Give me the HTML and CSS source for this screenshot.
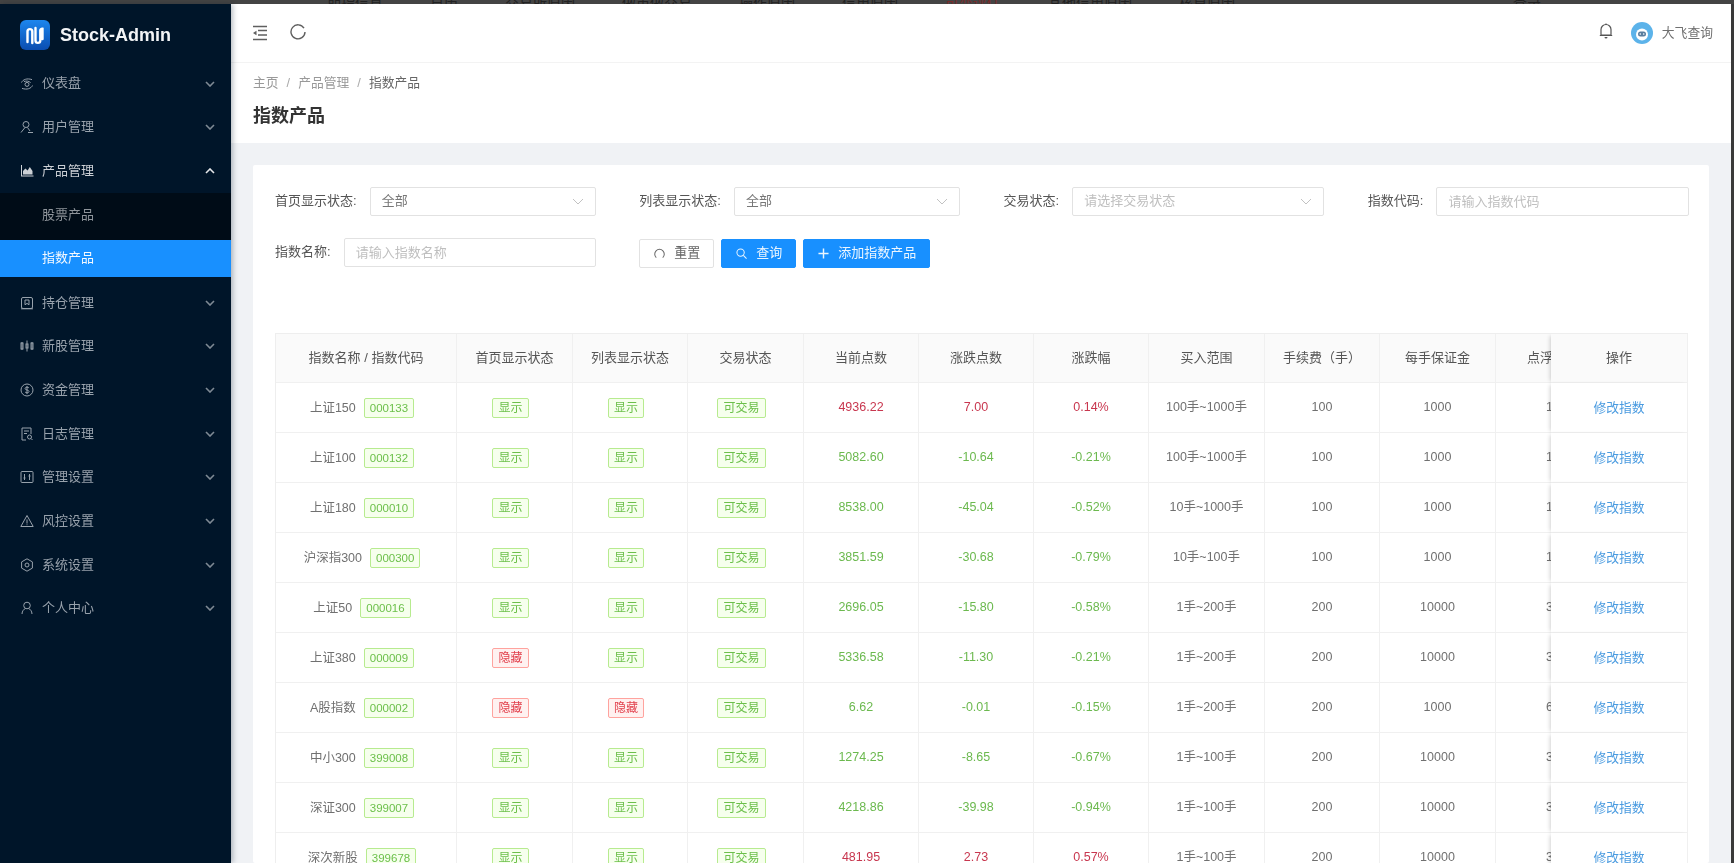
FILE: index.html
```html
<!DOCTYPE html>
<html lang="zh-CN">
<head>
<meta charset="utf-8">
<title>Stock-Admin 指数产品</title>
<link rel="stylesheet" href="styles.css">
</head>
<body>
<div class="app">
  <div class="strip">
    <span>期指信息</span><span>日历</span><span>交易所原因</span><span>做市做交易</span><span>操作原因</span><span>信用原因</span><span class="strip-red">可变评估</span><span>其他信用原因</span><span>核算原因</span><span class="strip-end">登录</span>
  </div>
  <div class="shell">
    <aside class="sidebar">
      <div class="brand">
        <svg class="logo" viewBox="0 0 30 30">
          <defs><linearGradient id="lg" x1="0" y1="0" x2="0" y2="1"><stop offset="0" stop-color="#1c86ee"/><stop offset="1" stop-color="#0a4db0"/></linearGradient></defs>
          <rect width="30" height="30" rx="6" fill="url(#lg)"/>
          <path d="M7.5 22V11.5a2.400 2.400 0 0 1 4.800 0V23M15.500 8v12.500a2.400 2.400 0 0 0 4.800 0V10.500a1.800 1.800 0 0 1 2.200-1.800V19" fill="none" stroke="#fff" stroke-width="2.400" stroke-linecap="round"/>
        </svg>
        <span class="brand-name">Stock-Admin</span>
      </div>
      <nav class="menu">
        <a class="item"><svg class="ic" viewBox="0 0 14 14"><circle cx="7" cy="7.400" r="2"/><path d="M1.500 5.500C3 2.400 7 1 12 2.600M12.500 8.500C11 11.600 7 13 2 11.400M4 4.600C6 3.700 9 4 10.600 5.600"/></svg><span class="label">仪表盘</span><svg class="chev" viewBox="0 0 10 6"><path d="M1 1l4 4 4-4"/></svg></a>
        <a class="item"><svg class="ic" viewBox="0 0 14 14"><circle cx="6" cy="4.500" r="3"/><path d="M1 12.500L5 7.500M7.500 7.500l2.500 3.500M8 12.500h5"/></svg><span class="label">用户管理</span><svg class="chev" viewBox="0 0 10 6"><path d="M1 1l4 4 4-4"/></svg></a>
        <a class="item item-open"><svg class="ic ic-fill" viewBox="0 0 14 14"><path d="M1 1v11.500h12.500v-1H2V1z"/><path d="M3 10.600V7l2.400-2.600 2.200 2L9.800 3l2.700 4v3.600z"/></svg><span class="label">产品管理</span><svg class="chev" viewBox="0 0 10 6"><path d="M1 5l4-4 4 4"/></svg></a>
        <div class="sub">
          <a class="sub-item">股票产品</a>
        </div>
        <a class="sub-item sub-active">指数产品</a>
        <a class="item"><svg class="ic" viewBox="0 0 14 14"><rect x="1.500" y="1.500" width="11" height="11" rx="1.500"/><path d="M1 12.800h12M5 4v4.800l2-1.400 2 1.400V4z"/></svg><span class="label">持仓管理</span><svg class="chev" viewBox="0 0 10 6"><path d="M1 1l4 4 4-4"/></svg></a>
        <a class="item"><svg class="ic" viewBox="0 0 14 14"><path d="M2 3v8M7 1.500v11M12 3v8"/><rect x="1" y="4" width="2" height="6"/><rect x="6" y="5" width="2" height="4"/><rect x="11" y="4" width="2" height="6"/></svg><span class="label">新股管理</span><svg class="chev" viewBox="0 0 10 6"><path d="M1 1l4 4 4-4"/></svg></a>
        <a class="item"><svg class="ic" viewBox="0 0 14 14"><circle cx="7" cy="7" r="6"/><path d="M9 5c-.500-1-3.800-1.400-3.900.500C5 7.500 9 6.500 9 8.500c0 1.800-3.500 1.500-4 .400M7 3v8"/></svg><span class="label">资金管理</span><svg class="chev" viewBox="0 0 10 6"><path d="M1 1l4 4 4-4"/></svg></a>
        <a class="item"><svg class="ic" viewBox="0 0 14 14"><path d="M6 13H2V1h9v6M4 4h5M4 6.500h3"/><circle cx="9.500" cy="10" r="2"/><path d="M11 11.500l1.500 1.500"/></svg><span class="label">日志管理</span><svg class="chev" viewBox="0 0 10 6"><path d="M1 1l4 4 4-4"/></svg></a>
        <a class="item"><svg class="ic" viewBox="0 0 14 14"><rect x="1" y="1.500" width="12" height="11" rx="1"/><path d="M4.500 4v6M9.500 4v6M3.500 8h2M8.500 6h2"/></svg><span class="label">管理设置</span><svg class="chev" viewBox="0 0 10 6"><path d="M1 1l4 4 4-4"/></svg></a>
        <a class="item"><svg class="ic" viewBox="0 0 14 14"><path d="M7 1.500L.800 12.500h12.400zM7 5.500v4M7 10.400v.800"/></svg><span class="label">风控设置</span><svg class="chev" viewBox="0 0 10 6"><path d="M1 1l4 4 4-4"/></svg></a>
        <a class="item"><svg class="ic" viewBox="0 0 14 14"><path d="M7 .800l5.400 3.100v6.200L7 13.200l-5.400-3.100V3.900z"/><circle cx="7" cy="7" r="2"/></svg><span class="label">系统设置</span><svg class="chev" viewBox="0 0 10 6"><path d="M1 1l4 4 4-4"/></svg></a>
        <a class="item"><svg class="ic" viewBox="0 0 14 14"><circle cx="7" cy="4.500" r="3.300"/><path d="M2 13c0-3 2-5 3.500-5.500M12 13c0-3-2-5-3.500-5.500"/></svg><span class="label">个人中心</span><svg class="chev" viewBox="0 0 10 6"><path d="M1 1l4 4 4-4"/></svg></a>
      </nav>
    </aside>
    <main class="main">
      <header class="topbar">
        <svg class="tool tool-menu" viewBox="0 0 16 16"><path d="M1 1.500h14M6 5.500h9M6 10h9M1 14.500h14"/><path class="solid" d="M1 8l3.500-2.300v4.600z"/></svg>
        <svg class="tool tool-refresh" viewBox="0 0 16 16"><path d="M14 4.200A7 7 0 1 0 15 8"/></svg>
        <div class="top-right">
          <svg class="bell" viewBox="0 0 14 16"><path d="M2 12V6.500a5 5 0 0 1 10 0V12zM.800 12.500h12.400"/><path class="solid" d="M5.500 14h3a1.500 1.500 0 0 1-3 0zM6 1.500a1 1 0 0 1 2 0z"/></svg>
          <svg class="avatar" viewBox="0 0 22 22"><circle cx="11" cy="11" r="11" fill="#5cb3ea"/><circle cx="11" cy="12.500" r="6" fill="#fff"/><rect x="7" y="9.500" width="8" height="5" rx="2.500" fill="#5a7d9e"/><circle cx="9.300" cy="12" r=".800" fill="#fff"/><circle cx="12.700" cy="12" r=".800" fill="#fff"/></svg>
          <span class="user">大飞查询</span>
        </div>
      </header>
      <section class="page-head">
        <div class="crumbs"><span>主页</span><i>/</i><span>产品管理</span><i>/</i><span class="crumb-now">指数产品</span></div>
        <h1 class="title">指数产品</h1>
      </section>
      <section class="content">
        <div class="card">
          <form class="filters">
            <div class="field"><label>首页显示状态:</label><div class="select"><span>全部</span><svg class="caret" viewBox="0 0 12 7"><path d="M1 1l5 5 5-5"/></svg></div></div>
            <div class="field"><label>列表显示状态:</label><div class="select"><span>全部</span><svg class="caret" viewBox="0 0 12 7"><path d="M1 1l5 5 5-5"/></svg></div></div>
            <div class="field"><label>交易状态:</label><div class="select select-empty"><span>请选择交易状态</span><svg class="caret" viewBox="0 0 12 7"><path d="M1 1l5 5 5-5"/></svg></div></div>
            <div class="field"><label>指数代码:</label><input class="input" placeholder="请输入指数代码"></div>
            <div class="field"><label>指数名称:</label><input class="input" placeholder="请输入指数名称"></div>
            <div class="actions">
              <button type="button" class="btn"><svg class="btn-ic" viewBox="0 0 12 12"><path d="M2.500 10.500A5.200 5.200 0 1 1 9.500 10.500"/></svg>重置</button>
              <button type="button" class="btn btn-primary"><svg class="btn-ic" viewBox="0 0 12 12"><circle cx="5" cy="5" r="4"/><path d="M8 8l3.500 3.500"/></svg>查询</button>
              <button type="button" class="btn btn-primary"><svg class="btn-ic btn-plus" viewBox="0 0 12 12"><path d="M6 .500v11M.500 6h11"/></svg>添加指数产品</button>
            </div>
          </form>
          <div class="table-wrap">
            <table class="table">
              <colgroup><col class="c-name"><col class="c-w"><col class="c-n"><col class="c-w"><col class="c-n"><col class="c-n"><col class="c-n"><col class="c-w"><col class="c-n"><col class="c-w"><col class="c-n"><col class="c-op"></colgroup>
              <thead><tr><th>指数名称 / 指数代码</th><th>首页显示状态</th><th>列表显示状态</th><th>交易状态</th><th>当前点数</th><th>涨跌点数</th><th>涨跌幅</th><th>买入范围</th><th>手续费（手）</th><th>每手保证金</th><th>点浮比例</th><th class="op">操作</th></tr></thead>
              <tbody>
                <tr><td>上证150<b class="tag tag-code">000133</b></td><td><b class="tag">显示</b></td><td><b class="tag">显示</b></td><td><b class="tag">可交易</b></td><td class="up">4936.22</td><td class="up">7.00</td><td class="up">0.14%</td><td>100手~1000手</td><td>100</td><td>1000</td><td>10</td><td class="op"><a class="link">修改指数</a></td></tr>
                <tr><td>上证100<b class="tag tag-code">000132</b></td><td><b class="tag">显示</b></td><td><b class="tag">显示</b></td><td><b class="tag">可交易</b></td><td class="down">5082.60</td><td class="down">-10.64</td><td class="down">-0.21%</td><td>100手~1000手</td><td>100</td><td>1000</td><td>10</td><td class="op"><a class="link">修改指数</a></td></tr>
                <tr><td>上证180<b class="tag tag-code">000010</b></td><td><b class="tag">显示</b></td><td><b class="tag">显示</b></td><td><b class="tag">可交易</b></td><td class="down">8538.00</td><td class="down">-45.04</td><td class="down">-0.52%</td><td>10手~1000手</td><td>100</td><td>1000</td><td>10</td><td class="op"><a class="link">修改指数</a></td></tr>
                <tr><td>沪深指300<b class="tag tag-code">000300</b></td><td><b class="tag">显示</b></td><td><b class="tag">显示</b></td><td><b class="tag">可交易</b></td><td class="down">3851.59</td><td class="down">-30.68</td><td class="down">-0.79%</td><td>10手~100手</td><td>100</td><td>1000</td><td>10</td><td class="op"><a class="link">修改指数</a></td></tr>
                <tr><td>上证50<b class="tag tag-code">000016</b></td><td><b class="tag">显示</b></td><td><b class="tag">显示</b></td><td><b class="tag">可交易</b></td><td class="down">2696.05</td><td class="down">-15.80</td><td class="down">-0.58%</td><td>1手~200手</td><td>200</td><td>10000</td><td>30</td><td class="op"><a class="link">修改指数</a></td></tr>
                <tr><td>上证380<b class="tag tag-code">000009</b></td><td><b class="tag tag-red">隐藏</b></td><td><b class="tag">显示</b></td><td><b class="tag">可交易</b></td><td class="down">5336.58</td><td class="down">-11.30</td><td class="down">-0.21%</td><td>1手~200手</td><td>200</td><td>10000</td><td>30</td><td class="op"><a class="link">修改指数</a></td></tr>
                <tr><td>A股指数<b class="tag tag-code">000002</b></td><td><b class="tag tag-red">隐藏</b></td><td><b class="tag tag-red">隐藏</b></td><td><b class="tag">可交易</b></td><td class="down">6.62</td><td class="down">-0.01</td><td class="down">-0.15%</td><td>1手~200手</td><td>200</td><td>1000</td><td>60</td><td class="op"><a class="link">修改指数</a></td></tr>
                <tr><td>中小300<b class="tag tag-code">399008</b></td><td><b class="tag">显示</b></td><td><b class="tag">显示</b></td><td><b class="tag">可交易</b></td><td class="down">1274.25</td><td class="down">-8.65</td><td class="down">-0.67%</td><td>1手~100手</td><td>200</td><td>10000</td><td>30</td><td class="op"><a class="link">修改指数</a></td></tr>
                <tr><td>深证300<b class="tag tag-code">399007</b></td><td><b class="tag">显示</b></td><td><b class="tag">显示</b></td><td><b class="tag">可交易</b></td><td class="down">4218.86</td><td class="down">-39.98</td><td class="down">-0.94%</td><td>1手~100手</td><td>200</td><td>10000</td><td>30</td><td class="op"><a class="link">修改指数</a></td></tr>
                <tr><td>深次新股<b class="tag tag-code">399678</b></td><td><b class="tag">显示</b></td><td><b class="tag">显示</b></td><td><b class="tag">可交易</b></td><td class="up">481.95</td><td class="up">2.73</td><td class="up">0.57%</td><td>1手~100手</td><td>200</td><td>10000</td><td>30</td><td class="op"><a class="link">修改指数</a></td></tr>
              </tbody>
            </table>
          </div>
        </div>
      </section>
    </main>
    <div class="edge"></div>
  </div>
</div>
</body>
</html>
```

FILE: styles.css
```css
* { box-sizing: border-box; }
html, body { margin: 0; height: 100%; overflow: hidden; background: #fff; }
body { font: 13px/1.4 "Liberation Sans", "Noto Sans CJK SC", sans-serif; color: #666; }
.app { height: 100vh; display: flex; flex-direction: column; filter: blur(.5px); }

.strip { flex: 0 0 4px; height: 4px; overflow: hidden; display: flex; gap: 47px; padding: 0 193px 0 327px; background: #444; color: #222; font-size: 14px; line-height: 6px; white-space: nowrap; }
.strip-red { color: #7a2a2a; }
.strip-end { margin-left: auto; }

.shell { flex: 1; min-height: 0; display: flex; }
.edge { flex: 0 0 3px; background: #3a3a3a; }

.sidebar { flex: 0 0 231px; background: #001529; position: relative; z-index: 2; box-shadow: 2px 0 5px rgba(0, 21, 41, .28); }
.brand { height: 57.7px; display: flex; align-items: center; padding: 5px 0 0 20px; gap: 10px; }
.logo { width: 30px; height: 30px; }
.brand-name { font-size: 18px; font-weight: 700; color: #f2f4f6; }
.item { height: 43.7px; display: flex; align-items: center; padding: 0 16px 0 20px; color: #98a2ac; }
.item-open { color: #ccd0d5; }
.ic { width: 14px; height: 14px; flex: none; fill: none; stroke: currentColor; stroke-width: 1; margin-right: 8px; }
.ic-fill { fill: currentColor; stroke: none; }
.label { flex: 1; }
.chev { width: 10px; height: 6px; fill: none; stroke: #7f8a95; stroke-width: 1.6; }
.item-open .chev { stroke: #e4e6e9; }
.sub { background: #000c17; padding-bottom: 3px; }
.sub-item { display: flex; align-items: center; height: 44px; padding-left: 42px; color: #8f959b; }
.sub-active { height: 37px; margin-bottom: 4px; background: #1890ff; color: #f4f9ff; }

.main { flex: 1; min-width: 0; display: flex; flex-direction: column; background: #f0f2f5; }
.topbar { flex: 0 0 59px; display: flex; align-items: center; padding: 0 18px 0 21px; background: #fff; border-bottom: 1px solid #f3f3f3; }
.tool { width: 16px; height: 16px; fill: none; stroke: #5f5f5f; stroke-width: 1.3; }
.tool .solid { fill: #5f5f5f; stroke: none; }
.tool-refresh { margin-left: 22px; margin-top: -3px; stroke-width: 1.4; }
.top-right { margin-left: auto; display: flex; align-items: center; }
.bell { width: 14px; height: 16px; fill: none; stroke: #555; stroke-width: 1.2; margin-top: -4px; }
.bell .solid { fill: #555; stroke: none; }
.avatar { width: 22px; height: 22px; margin-left: 18px; }
.user { margin-left: 9px; font-size: 12.8px; color: #707070; }

.page-head { flex: 0 0 80px; background: #fff; padding: 11px 22px 0; }
.crumbs { display: flex; gap: 8px; font-size: 12.8px; color: #999; line-height: 18px; }
.crumbs i { font-style: normal; color: #aaa; }
.crumb-now { color: #666; }
.title { margin: 11px 0 0; font-size: 18px; line-height: 26px; font-weight: 700; color: #333; }

.content { flex: 1; min-height: 0; padding: 22px 22px 0; }
.card { height: 100%; padding: 22px 21px 0 22px; background: #fff; border-radius: 2px; }

.filters { display: grid; grid-template-columns: repeat(4, 320.75px); column-gap: 43.5px; row-gap: 22px; }
.field { display: flex; align-items: center; gap: 13px; height: 29px; color: #555; }
.field label { white-space: nowrap; }
.select, .input { flex: 1; min-width: 0; height: 29px; padding: 0 11px; border: 1px solid #e2e2e2; border-radius: 2px; background: #fff; font: inherit; color: #777; }
.select { display: flex; align-items: center; justify-content: space-between; }
.select-empty span { color: #bfbfbf; }
.input { outline: none; }
.input::placeholder { color: #bfbfbf; opacity: 1; }
.caret { width: 12px; height: 7px; fill: none; stroke: #c2c2c2; }
.actions { grid-column: span 3; display: flex; gap: 7px; padding-top: 1px; }
.btn { height: 29px; padding: 0 13px 0 14px; display: inline-flex; align-items: center; gap: 9px; border: 1px solid #e2e2e2; border-radius: 2px; background: #fff; font: inherit; color: #666; }
.btn-primary { background: #1890ff; border-color: #1890ff; color: #eaf5ff; }
.btn-ic { width: 11px; height: 11px; fill: none; stroke: currentColor; stroke-width: 1.1; }
.btn-plus { stroke-width: 1.6; }

.table-wrap { margin-top: 65px; overflow: hidden; border-top: 1px solid #eee; border-left: 1px solid #eee; }
.table { width: 1472px; table-layout: fixed; border-collapse: separate; border-spacing: 0; }
.c-name { width: 181px; } .c-w { width: 116px; } .c-n { width: 115px; } .c-op { width: 137px; }
.table th, .table td { padding: 0; text-align: center; white-space: nowrap; border-right: 1px solid #f0f0f0; border-bottom: 1px solid #f0f0f0; }
.table th { height: 49px; background: #fafafa; font-weight: 400; color: #555; }
.table td { height: 50px; padding-top: 1px; font-size: 12.5px; color: #707070; }
.table .op { position: sticky; right: 0; background: #fff; box-shadow: -3px 0 4px -2px rgba(0, 0, 0, .18); }
.table th.op { background: #fafafa; color: #555; }
.table td.up { color: #c8374f; }
.table td.down { color: #6cb94f; }
.tag { display: inline-block; height: 20px; line-height: 18px; margin-right: 8px; padding: 0 5px; border: 1px solid #b7eb8f; border-radius: 2px; background: #f6ffed; font-size: 12px; font-weight: 400; color: #6cc04a; }
.tag-code { margin-left: 8px; font-size: 11.5px; }
.tag-red { border-color: #ffa39e; background: #fff1f0; color: #e2404c; }
.link { font-size: 12.8px; color: #4a9be0; }
```
